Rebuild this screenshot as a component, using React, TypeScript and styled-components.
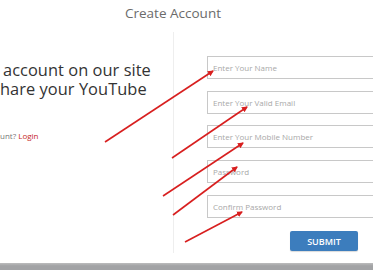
import React from 'react';
import styled, { createGlobalStyle } from 'styled-components';

const GlobalStyle = createGlobalStyle`
  html, body {
    margin: 0;
    padding: 0;
    background: #fff;
    overflow: hidden;
  }
  body {
    font-family: "Open Sans", "Liberation Sans", sans-serif;
  }
`;

const Page = styled.div`
  position: relative;
  width: 373px;
  height: 270px;
  display: flex;
  flex-direction: column;
  overflow: hidden;
`;

const Title = styled.h1`
  margin: 0;
  width: 346px;
  padding-top: 3px;
  text-align: center;
  font-size: 13.5px;
  font-weight: 400;
  line-height: 20px;
  color: #6b6b6b;
`;

const Body = styled.div`
  display: flex;
  margin-top: 9px;
`;

const Intro = styled.div`
  flex: 0 0 173px;
  padding-top: 28px;
  box-sizing: border-box;
  overflow: hidden;
`;

const Pitch = styled.p`
  margin: 0;
  text-indent: 3px;
  font-size: 16.4px;
  line-height: 19px;
  letter-spacing: 0.05px;
  color: #333;
  white-space: nowrap;
`;

const LoginNote = styled.p`
  margin: 33px 0 0 0;
  font-size: 8px;
  line-height: 10px;
  color: #777;
  white-space: nowrap;

  a {
    color: #c62828;
    text-decoration: none;
  }
`;

const FormColumn = styled.form`
  flex: 0 0 auto;
  border-left: 1px solid #eeeeee;
  padding: 24px 0 0 33px;
  height: 221px;
  box-sizing: border-box;
  display: flex;
  flex-direction: column;
  gap: 11.7px;
`;

const Field = styled.input`
  width: 220px;
  height: 23px;
  box-sizing: border-box;
  border: 1px solid #c8c8c8;
  padding: 0 5px;
  font-family: "Open Sans", "Liberation Sans", sans-serif;
  font-size: 8px;
  color: #555;
  outline: none;

  &::placeholder {
    color: #a8a8a8;
  }
`;

const Submit = styled.button`
  align-self: flex-start;
  margin: 2px 0 0 83px;
  width: 68px;
  height: 20px;
  border: none;
  border-radius: 2px;
  background: #3c7dbd;
  color: #fff;
  font-family: "Open Sans", "Liberation Sans", sans-serif;
  font-size: 9px;
  font-weight: 600;
  box-shadow: 0 1px 1px rgba(0, 0, 0, 0.15);
`;

const Footer = styled.div`
  margin-top: auto;
  height: 7px;
  background: linear-gradient(#bdbdbd, #a2a3a5 40%);
`;

const Arrows = styled.svg`
  position: absolute;
  inset: 0;
  pointer-events: none;
`;

const arrows = [
  [105, 142, 213, 71],
  [172, 158, 247, 107],
  [163, 196, 243, 143],
  [173, 215, 237, 167],
  [185, 242, 242, 212],
];

const App: React.FC = () => (
  <Page>
    <GlobalStyle />
    <Title>Create Account</Title>
    <Body>
      <Intro>
        <Pitch>
          account on our site
          <br />
          hare your YouTube
        </Pitch>
        <LoginNote>
          unt? <a href="#">Login</a>
        </LoginNote>
      </Intro>
      <FormColumn onSubmit={(e) => e.preventDefault()}>
        <Field placeholder="Enter Your Name" />
        <Field placeholder="Enter Your Valid Email" />
        <Field placeholder="Enter Your Mobile Number" />
        <Field type="password" placeholder="Password" />
        <Field type="password" placeholder="Confirm Password" />
        <Submit type="submit">SUBMIT</Submit>
      </FormColumn>
    </Body>
    <Footer />
    <Arrows width="373" height="270" viewBox="0 0 373 270">
      <defs>
        <marker id="head" markerWidth="6" markerHeight="6" refX="5" refY="3" orient="auto" markerUnits="userSpaceOnUse">
          <path d="M0,0 L6,3 L0,6 Z" fill="#d81f1f" />
        </marker>
      </defs>
      {arrows.map(([x1, y1, x2, y2], i) => (
        <line key={i} x1={x1} y1={y1} x2={x2} y2={y2} stroke="#d81f1f" strokeWidth="1.6" markerEnd="url(#head)" />
      ))}
    </Arrows>
  </Page>
);

export default App;
